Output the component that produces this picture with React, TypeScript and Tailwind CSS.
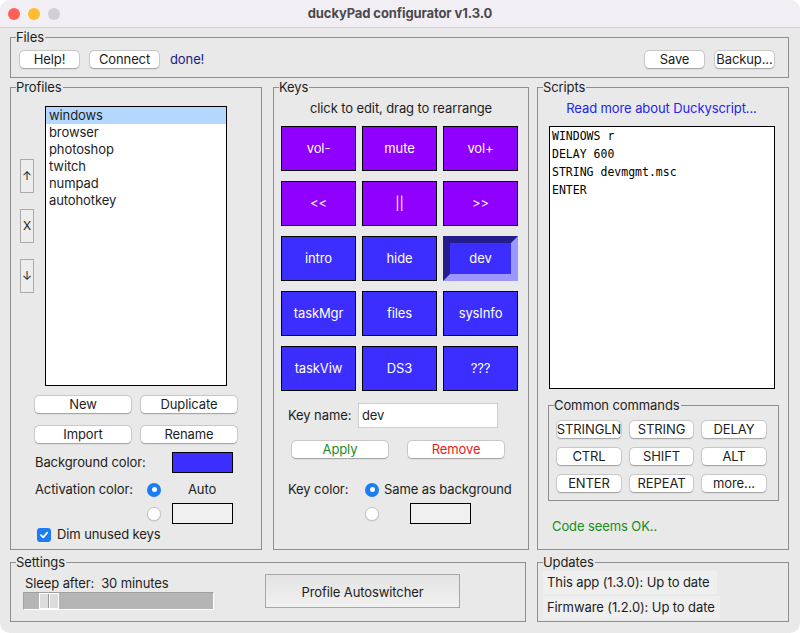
import React from "react";

const BTN =
  "flex items-center justify-center bg-white rounded-[4px] shadow-[0_0_0_0.5px_rgba(0,0,0,0.2),0_0.5px_1.5px_rgba(0,0,0,0.25)] text-[13px] leading-none";

function Btn({
  children,
  className = "",
}: {
  children: React.ReactNode;
  className?: string;
}) {
  return (
    <button type="button" className={`${BTN} ${className}`}>
      {children}
    </button>
  );
}

function Frame({
  label,
  className = "",
  children,
}: {
  label: string;
  className?: string;
  children?: React.ReactNode;
}) {
  return (
    <div className={`relative border border-[#8f8f8f] ${className}`}>
      <span className="absolute -top-[9px] left-[5px] bg-[#e9e9e9] pr-[1px] text-[13px] leading-[16px] text-[#1d1d1d]">
        {label}
      </span>
      {children}
    </div>
  );
}

function Radio({ on }: { on: boolean }) {
  return on ? (
    <div className="w-[14px] h-[14px] rounded-full bg-[#1a7df4] flex items-center justify-center shrink-0">
      <div className="w-[5px] h-[5px] rounded-full bg-white" />
    </div>
  ) : (
    <div className="w-[14px] h-[14px] rounded-full bg-white border border-[#c4c4c4] shadow-[0_0.5px_1px_rgba(0,0,0,0.15)] shrink-0" />
  );
}

function Key({
  label,
  color,
  active = false,
}: {
  label: string;
  color: "p" | "b";
  active?: boolean;
}) {
  if (active) {
    return (
      <div className="w-[75px] h-[45px] bg-[#3b2eff] border-[7px] border-t-[#231d8e] border-l-[#231d8e] border-r-[#9c97ff] border-b-[#9c97ff] flex items-center justify-center pt-[1px] text-white text-[13px]">
        {label}
      </div>
    );
  }
  return (
    <div
      className={`w-[75px] h-[45px] border border-black flex items-center justify-center pt-[1px] text-white text-[13px] ${
        color === "p" ? "bg-[#8f00ff]" : "bg-[#3b2eff]"
      }`}
    >
      {label}
    </div>
  );
}

export default function App() {
  const profiles = ["windows", "browser", "photoshop", "twitch", "numpad", "autohotkey"];
  const keys: [string, "p" | "b", boolean?][] = [
    ["vol-", "p"],
    ["mute", "p"],
    ["vol+", "p"],
    ["<<", "p"],
    ["||", "p"],
    [">>", "p"],
    ["intro", "b"],
    ["hide", "b"],
    ["dev", "b", true],
    ["taskMgr", "b"],
    ["files", "b"],
    ["sysInfo", "b"],
    ["taskViw", "b"],
    ["DS3", "b"],
    ["???", "b"],
  ];
  const cmds = ["STRINGLN", "STRING", "DELAY", "CTRL", "SHIFT", "ALT", "ENTER", "REPEAT", "more..."];

  return (
    <div className="w-[800px] h-[633px] bg-white font-['Inter','Liberation_Sans',sans-serif] tracking-[-0.1px] text-[#1d1d1d]">
      <div className="w-full h-full rounded-[10px] overflow-hidden bg-[#e9e9e9] flex flex-col">
        {/* title bar */}
        <div className="h-[28px] shrink-0 bg-[#f2eff4] border-b border-[#d3d1d6] flex items-center">
          <div className="w-[90px] flex items-center gap-[8px] pl-[8px]">
            <div className="w-[12px] h-[12px] rounded-full bg-[#fe5f57]" />
            <div className="w-[12px] h-[12px] rounded-full bg-[#febc2e]" />
            <div className="w-[12px] h-[12px] rounded-full bg-[#d1cfd4]" />
          </div>
          <div className="flex-1 text-center text-[13px] font-bold text-[#4b494e]">
            duckyPad configurator v1.3.0
          </div>
          <div className="w-[90px]" />
        </div>

        {/* body */}
        <div className="pl-[10px] pt-[9px] flex flex-col">
          {/* Files */}
          <Frame label="Files" className="w-[779px] h-[41px]">
            <div className="flex items-center pt-[13px] pl-[9px] pr-[14px]">
              <Btn className="w-[59px] h-[17px]">Help!</Btn>
              <Btn className="w-[69px] h-[17px] ml-[11px]">Connect</Btn>
              <span className="ml-[11px] text-[13px] text-[#1b1b86] leading-none">done!</span>
              <div className="flex-1" />
              <Btn className="w-[59px] h-[17px]">Save</Btn>
              <Btn className="w-[59px] h-[17px] ml-[11px]">Backup...</Btn>
            </div>
          </Frame>

          {/* main row */}
          <div className="flex mt-[9px]">
            {/* Profiles */}
            <Frame label="Profiles" className="w-[252px] h-[463px]">
              <div className="flex pl-[9px] pt-[18px]">
                <div className="w-[14px] mt-[53px] flex flex-col gap-[16px]">
                  {["↑", "X", "↓"].map((g) => (
                    <div
                      key={g}
                      className="w-[14px] h-[34px] bg-[#ededed] border border-[#ababab] flex items-center justify-center text-[12px] leading-none"
                    >
                      {g}
                    </div>
                  ))}
                </div>
                <div className="ml-[11px] w-[182px] h-[280px] bg-white border border-black">
                  {profiles.map((p, i) => (
                    <div
                      key={p}
                      className={`h-[17px] pl-[3px] text-[13px] leading-[17px] ${
                        i === 0 ? "bg-[#b3d7ff]" : ""
                      }`}
                    >
                      {p}
                    </div>
                  ))}
                </div>
              </div>
              <div className="pl-[24px] mt-[10px] flex gap-[10px]">
                <Btn className="w-[96px] h-[17px]">New</Btn>
                <Btn className="w-[96px] h-[17px]">Duplicate</Btn>
              </div>
              <div className="pl-[24px] mt-[13px] flex gap-[10px]">
                <Btn className="w-[96px] h-[17px]">Import</Btn>
                <Btn className="w-[96px] h-[17px]">Rename</Btn>
              </div>
              <div className="pl-[24px] mt-[9px] flex items-center h-[21px]">
                <span className="w-[137px] text-[13px]">Background color:</span>
                <div className="w-[61px] h-[21px] bg-[#3b2eff] border border-black" />
              </div>
              <div className="pl-[24px] mt-[6px] flex items-center h-[21px]">
                <span className="w-[112px] text-[13px]">Activation color:</span>
                <Radio on />
                <span className="ml-[27px] text-[13px]">Auto</span>
              </div>
              <div className="pl-[136px] mt-[3px] flex items-center h-[21px]">
                <Radio on={false} />
                <div className="ml-[11px] w-[61px] h-[21px] bg-[#f0f0f0] border border-black" />
              </div>
              <div className="pl-[26px] mt-[4px] flex items-center h-[14px]">
                <div className="w-[14px] h-[14px] rounded-[3px] bg-[#1a7df4] flex items-center justify-center">
                  <svg width="10" height="10" viewBox="0 0 10 10">
                    <path d="M2 5.2 L4.2 7.4 L8.2 2.6" stroke="white" strokeWidth="1.8" fill="none" strokeLinecap="round" strokeLinejoin="round" />
                  </svg>
                </div>
                <span className="ml-[6px] text-[13px]">Dim unused keys</span>
              </div>
            </Frame>

            {/* Keys */}
            <Frame label="Keys" className="w-[256px] h-[463px] ml-[11px]">
              <div className="mt-[12px] text-center text-[13px] leading-[16px]">
                click to edit, drag to rearrange
              </div>
              <div className="ml-[7px] mt-[10px] grid grid-cols-[75px_75px_75px] gap-x-[6px] gap-y-[10px] w-max">
                {keys.map(([l, c, a]) => (
                  <Key key={l} label={l} color={c} active={!!a} />
                ))}
              </div>
              <div className="ml-[14px] mt-[12px] flex items-center h-[25px]">
                <span className="w-[70px] text-[13px]">Key name:</span>
                <div className="w-[140px] h-[25px] bg-white border border-[#cfcfcf] flex items-center pl-[3px] text-[13px]">
                  dev
                </div>
              </div>
              <div className="ml-[18px] mt-[13px] flex gap-[20px]">
                <Btn className="w-[96px] h-[17px] text-[#1e8c1e]">Apply</Btn>
                <Btn className="w-[96px] h-[17px] text-[#f01818]">Remove</Btn>
              </div>
              <div className="ml-[14px] mt-[21px] flex items-center h-[21px]">
                <span className="w-[77px] text-[13px]">Key color:</span>
                <Radio on />
                <span className="ml-[5px] text-[13px]">Same as background</span>
              </div>
              <div className="ml-[91px] mt-[3px] flex items-center h-[21px]">
                <Radio on={false} />
                <div className="ml-[31px] w-[61px] h-[21px] bg-[#f0f0f0] border border-black" />
              </div>
            </Frame>

            {/* Scripts */}
            <Frame label="Scripts" className="w-[252px] h-[463px] ml-[8px]">
              <div className="mt-[12px] text-center text-[13px] leading-[16px] text-[#2424f0] pr-[3px]">
                Read more about Duckyscript...
              </div>
              <div className="ml-[11px] mt-[10px] w-[226px] h-[263px] bg-white border border-black pl-[2px] pt-[0px] font-['DejaVu_Sans_Mono',monospace] tracking-normal text-[11.5px] leading-[18px] text-black">
                <div>WINDOWS r</div>
                <div>DELAY 600</div>
                <div>STRING devmgmt.msc</div>
                <div>ENTER</div>
              </div>
              <Frame label="Common commands" className="ml-[10px] mt-[16px] w-[231px] h-[96px]">
                <div className="pl-[8px] pt-[15px] grid grid-cols-[64px_63px_64px] gap-x-[9px] gap-y-[10px] w-max">
                  {cmds.map((c) => (
                    <Btn key={c} className="h-[17px] w-full">
                      {c}
                    </Btn>
                  ))}
                </div>
              </Frame>
              <div className="ml-[14px] mt-[17px] text-[13px] leading-[16px] text-[#1a8c1a]">
                Code seems OK..
              </div>
            </Frame>
          </div>

          {/* bottom row */}
          <div className="flex mt-[12px]">
            <Frame label="Settings" className="w-[516px] h-[60px]">
              <div className="flex">
                <div className="ml-[12px] mt-[12px] flex flex-col">
                  <div className="ml-[2px] text-[13px] leading-[16px]">Sleep after:&nbsp; 30 minutes</div>
                  <div className="mt-[1px] w-[191px] h-[18px] bg-[#b5b5b5] border-b border-r border-white border-t border-l border-t-[#a0a0a0] border-l-[#a0a0a0] pl-[15px] flex">
                    <div className="w-[20px] h-full bg-[#dcdcdc] border border-white flex">
                      <div className="w-[9px] h-full border-r border-[#9a9a9a]" />
                      <div className="w-[1px] h-full bg-white" />
                    </div>
                  </div>
                </div>
                <div className="ml-[51px] mt-[11px] w-[195px] h-[34px] border border-[#a6a6a6] bg-gradient-to-b from-[#e3e3e3] to-[#f1f1f1] flex items-center justify-center pt-[3px] text-[13px]">
                  Profile Autoswitcher
                </div>
              </div>
            </Frame>
            <Frame label="Updates" className="w-[252px] h-[60px] ml-[11px]">
              <div className="pl-[5px] pt-[8px] flex flex-col gap-[2px]">
                <div className="w-[174px] h-[23px] bg-[#efefef] pl-[4px] flex items-center text-[13px]">
                  This app (1.3.0): Up to date
                </div>
                <div className="w-[177px] h-[23px] bg-[#efefef] pl-[4px] flex items-center text-[13px]">
                  Firmware (1.2.0): Up to date
                </div>
              </div>
            </Frame>
          </div>
        </div>
      </div>
    </div>
  );
}
